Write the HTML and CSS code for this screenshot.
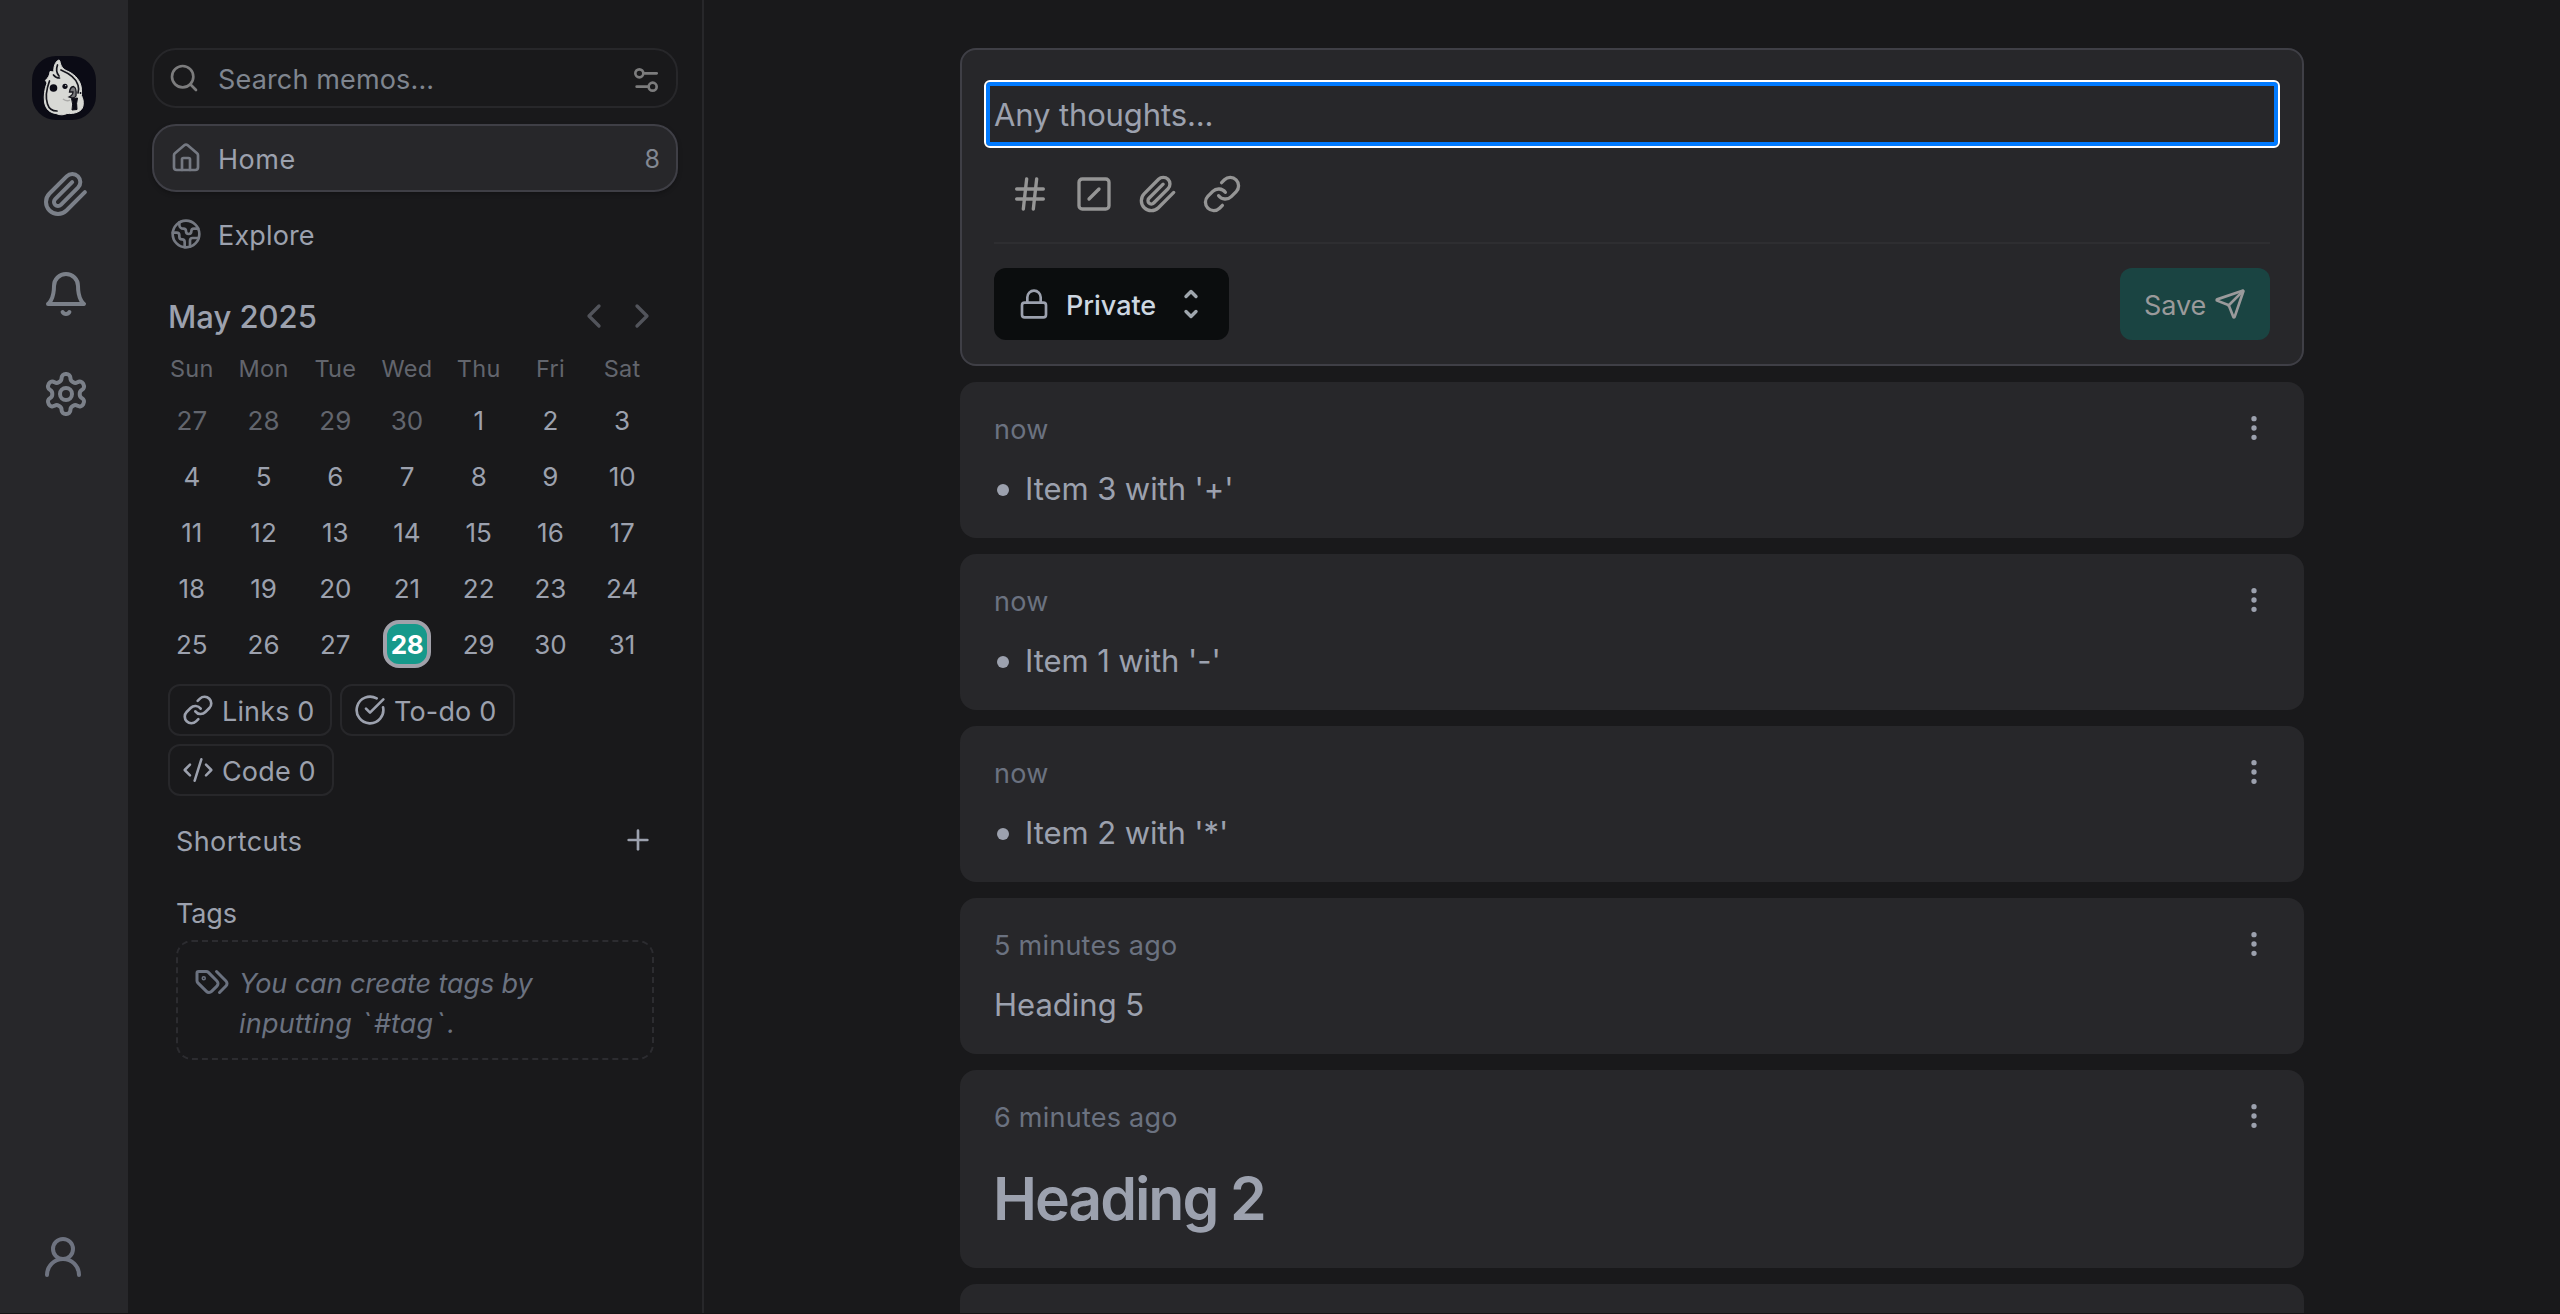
FILE: index.html
```
<!DOCTYPE html>
<html lang="en">
<head>
<meta charset="utf-8">
<title>Memos</title>
<link rel="stylesheet" href="styles.css">
</head>
<body>
<svg class="sprite" aria-hidden="true">
  <symbol id="clip" viewBox="0 0 24 24"><path d="m21.44 11.05-9.19 9.19a6 6 0 0 1-8.49-8.49l8.57-8.57A4 4 0 1 1 18 8.84l-8.59 8.57a2 2 0 0 1-2.83-2.83l8.49-8.48"/></symbol>
  <symbol id="link" viewBox="0 0 24 24"><path d="M10 13a5 5 0 0 0 7.54.54l3-3a5 5 0 0 0-7.07-7.07l-1.72 1.71"/><path d="M14 11a5 5 0 0 0-7.54-.54l-3 3a5 5 0 0 0 7.07 7.07l1.71-1.71"/></symbol>
  <symbol id="dots" viewBox="0 0 24 24"><circle cx="12" cy="12" r="1"/><circle cx="12" cy="5" r="1"/><circle cx="12" cy="19" r="1"/></symbol>
</svg>
<div class="app">
  <nav class="rail">
    <div class="rail-top">
      <svg class="avatar" viewBox="0 0 64 64">
        <rect width="64" height="64" rx="24" fill="#0b0b15"/>
        <path d="M26.3 4.2C23 6 21.500 11 21.800 16L18 15.500C18 19 16 22 13.500 24.300L15 27C12.500 33 11.800 40 12.500 46C13.500 53 18 57 24 57.500C28 59.500 32 59 35 57.500C42 58 50 56 51 50C52 45 50.500 42 49.500 39.500C49.500 37 50 31 48 27C45 20 39 16.500 34 14.500C30 12 28.500 9 28 5.500Q27.500 3.600 26.300 4.200Z" fill="#d8d9d5" stroke="#d8d9d5" stroke-width="1"/>
        <path d="M25.500 9C24 13 24.500 17 27 20M21.500 19C23 21 25 22 27.500 22M17.500 25C14.500 33 13.500 42 15.500 48C17 53 21 55 25 55M29 14C36 17 44 21 46 29C47 32 46.500 35 46 37" fill="none" stroke="#15151c" stroke-width="1.700" stroke-linecap="round"/>
        <path d="M31 43Q35 46 38 44" fill="none" stroke="#aaaaa8" stroke-width="1.500"/>
        <circle cx="21.500" cy="32" r="3.800" fill="#0b0b15"/>
        <circle cx="33" cy="30.300" r="2.600" fill="#0b0b15"/><circle cx="33.700" cy="29.600" r=".7" fill="#d8d9d5"/>
        <path d="M37.500 36Q38 31 41.500 30.500Q45 32 44 40Q42 43 37 41Q41 39 41 36Z" fill="#77777a" stroke="#15151c" stroke-width="1.300"/>
        <path d="M39.500 42.500L45.500 42Q44 47 45 53.500L40 54Q41.500 48 39.500 42.500Z" fill="#0b0b15" stroke="#0b0b15"/>
        <circle cx="48.500" cy="37" r=".9" fill="#0b0b15"/>
      </svg>
      <svg class="icon rail-icon"><use href="#clip"/></svg>
      <svg class="icon rail-icon" viewBox="0 0 24 24"><path d="M6 8a6 6 0 0 1 12 0c0 7 3 9 3 9H3s3-2 3-9"/><path d="M10.300 21a1.940 1.940 0 0 0 3.400 0"/></svg>
      <svg class="icon rail-icon" viewBox="0 0 24 24"><path d="M12.220 2h-.44a2 2 0 0 0-2 2v.18a2 2 0 0 1-1 1.730l-.43.25a2 2 0 0 1-2 0l-.15-.08a2 2 0 0 0-2.730.73l-.22.38a2 2 0 0 0 .73 2.730l.15.1a2 2 0 0 1 1 1.720v.51a2 2 0 0 1-1 1.740l-.15.09a2 2 0 0 0-.73 2.730l.22.38a2 2 0 0 0 2.730.73l.15-.08a2 2 0 0 1 2 0l.43.25a2 2 0 0 1 1 1.730V20a2 2 0 0 0 2 2h.44a2 2 0 0 0 2-2v-.18a2 2 0 0 1 1-1.730l.43-.25a2 2 0 0 1 2 0l.15.08a2 2 0 0 0 2.730-.73l.22-.39a2 2 0 0 0-.73-2.730l-.15-.08a2 2 0 0 1-1-1.740v-.5a2 2 0 0 1 1-1.740l.15-.09a2 2 0 0 0 .73-2.730l-.22-.38a2 2 0 0 0-2.730-.73l-.15.08a2 2 0 0 1-2 0l-.43-.25a2 2 0 0 1-1-1.730V4a2 2 0 0 0-2-2z"/><circle cx="12" cy="12" r="3"/></svg>
    </div>
    <svg class="icon user-icon" viewBox="0 0 24 24"><circle cx="12" cy="8" r="5"/><path d="M20 21a8 8 0 0 0-16 0"/></svg>
  </nav>

  <aside class="sidebar">
    <div class="search">
      <svg class="icon" viewBox="0 0 24 24"><circle cx="11" cy="11" r="8"/><path d="m21 21-4.300-4.300"/></svg>
      <span class="search-text">Search memos...</span>
      <svg class="icon filter-icon" viewBox="0 0 24 24"><path d="M20 7h-9"/><path d="M14 17H5"/><circle cx="17" cy="17" r="3"/><circle cx="7" cy="7" r="3"/></svg>
    </div>
    <a class="nav-item active">
      <svg class="icon" viewBox="0 0 24 24"><path d="M15 21v-8a1 1 0 0 0-1-1h-4a1 1 0 0 0-1 1v8"/><path d="M3 10a2 2 0 0 1 .709-1.528l7-5.999a2 2 0 0 1 2.582 0l7 5.999A2 2 0 0 1 21 10v9a2 2 0 0 1-2 2H5a2 2 0 0 1-2-2z"/></svg>
      <span class="nav-label home-label">Home</span><span class="count">8</span>
    </a>
    <a class="nav-item explore">
      <svg class="icon" viewBox="0 0 24 24"><path d="M21.540 15H17a2 2 0 0 0-2 2v4.540"/><path d="M7 3.340V5a3 3 0 0 0 3 3a2 2 0 0 1 2 2c0 1.100.9 2 2 2a2 2 0 0 0 2-2c0-1.100.9-2 2-2h3.170"/><path d="M11 21.950V18a2 2 0 0 0-2-2a2 2 0 0 1-2-2v-1a2 2 0 0 0-2-2H2.050"/><circle cx="12" cy="12" r="10"/></svg>
      <span class="nav-label">Explore</span>
    </a>
    <div class="month">
      <span class="month-name">May 2025</span>
      <svg class="icon arrow" viewBox="0 0 24 24"><path d="m15 18-6-6 6-6"/></svg>
      <svg class="icon arrow" viewBox="0 0 24 24"><path d="m9 18 6-6-6-6"/></svg>
    </div>
    <div class="weekdays"><span>Sun</span><span>Mon</span><span>Tue</span><span>Wed</span><span>Thu</span><span>Fri</span><span>Sat</span></div>
    <div class="days">
      <span class="out">27</span><span class="out">28</span><span class="out">29</span><span class="out">30</span><span>1</span><span>2</span><span>3</span>
      <span>4</span><span>5</span><span>6</span><span>7</span><span>8</span><span>9</span><span>10</span>
      <span>11</span><span>12</span><span>13</span><span>14</span><span>15</span><span>16</span><span>17</span>
      <span>18</span><span>19</span><span>20</span><span>21</span><span>22</span><span>23</span><span>24</span>
      <span>25</span><span>26</span><span>27</span><span class="today"><b>28</b></span><span>29</span><span>30</span><span>31</span>
    </div>
    <div class="chips">
      <div class="chip chip-links"><svg class="icon"><use href="#link"/></svg><span>Links 0</span></div>
      <div class="chip chip-todo"><svg class="icon" viewBox="0 0 24 24"><path d="M21.801 10A10 10 0 1 1 17 3.335"/><path d="m9 11 3 3L22 4"/></svg><span>To-do 0</span></div>
      <div class="chip chip-code"><svg class="icon" viewBox="0 0 24 24"><path d="m18 16 4-4-4-4"/><path d="m6 8-4 4 4 4"/><path d="m14.500 4-5 16"/></svg><span>Code 0</span></div>
    </div>
    <div class="section shortcuts"><span class="shortcuts-label">Shortcuts</span><svg class="icon plus" viewBox="0 0 24 24"><path d="M5 12h14"/><path d="M12 5v14"/></svg></div>
    <div class="section tags"><span>Tags</span></div>
    <div class="tag-hint">
      <svg class="icon" viewBox="0 0 24 24"><path d="m15 5 6.300 6.300a2.400 2.400 0 0 1 0 3.400L17 19"/><path d="M9.586 5.586A2 2 0 0 0 8.172 5H3a1 1 0 0 0-1 1v5.172a2 2 0 0 0 .586 1.414L8.290 18.290a2.426 2.426 0 0 0 3.420 0l3.580-3.580a2.426 2.426 0 0 0 0-3.420z"/><circle cx="6.500" cy="9.500" r=".5"/></svg>
      <p>You can create tags by<br><span class="hint-end">inputting <span class="tick">`</span>#tag<span class="tick">`</span>.</span></p>
    </div>
  </aside>

  <main class="main">
    <section class="editor">
      <div class="field">Any thoughts...</div>
      <div class="tools">
        <svg class="icon" viewBox="0 0 24 24"><path d="M4 9h16M4 15h16M10 3 8 21M16 3l-2 18"/></svg>
        <svg class="icon" viewBox="0 0 24 24"><rect x="3" y="3" width="18" height="18" rx="2"/><path d="m9 15 6-6"/></svg>
        <svg class="icon"><use href="#clip"/></svg>
        <svg class="icon"><use href="#link"/></svg>
      </div>
      <div class="actions">
        <div class="visibility">
          <svg class="icon lock" viewBox="0 0 24 24"><rect x="3" y="11" width="18" height="11" rx="2"/><path d="M7 11V7a5 5 0 0 1 10 0v4"/></svg>
          <span>Private</span>
          <svg class="icon updown" viewBox="0 0 16 32"><path d="m3 8.500 5-5 5 5M3 23.500l5 5 5-5"/></svg>
        </div>
        <div class="save"><span>Save</span><svg class="icon" viewBox="0 0 24 24"><path d="M14.536 21.686a.5.5 0 0 0 .937-.024l6.500-19a.496.496 0 0 0-.635-.635l-19 6.500a.5.5 0 0 0-.024.937l7.930 3.180a2 2 0 0 1 1.112 1.110z"/><path d="m21.854 2.147-10.940 10.939"/></svg></div>
      </div>
    </section>
    <article class="memo">
      <header><time>now</time><svg class="icon"><use href="#dots"/></svg></header>
      <div class="body item"><i class="bullet"></i><span>Item 3 with '+'</span></div>
    </article>
    <article class="memo">
      <header><time>now</time><svg class="icon"><use href="#dots"/></svg></header>
      <div class="body item"><i class="bullet"></i><span>Item 1 with '-'</span></div>
    </article>
    <article class="memo">
      <header><time>now</time><svg class="icon"><use href="#dots"/></svg></header>
      <div class="body item"><i class="bullet"></i><span>Item 2 with '*'</span></div>
    </article>
    <article class="memo">
      <header><time>5 minutes ago</time><svg class="icon"><use href="#dots"/></svg></header>
      <h5 class="body">Heading 5</h5>
    </article>
    <article class="memo memo-h2">
      <header><time>6 minutes ago</time><svg class="icon"><use href="#dots"/></svg></header>
      <h2 class="body">Heading 2</h2>
    </article>
    <article class="memo"></article>
  </main>
</div>
</body>
</html>
```
FILE: styles.css
```
* { box-sizing: border-box; margin: 0; padding: 0; }
html, body { height: 100%; overflow: hidden; }
body {
  background: #161415;
  color: #9ca1ae;
  font: 440 27px/40px Inter, "Liberation Sans", sans-serif;
  letter-spacing: .15px;
}
.sprite { display: none; }
.app { display: flex; height: 1313px; background: #19191b; overflow: hidden; }

.icon {
  display: block;
  flex: none;
  width: 32px;
  height: 32px;
  fill: none;
  stroke: currentColor;
  stroke-width: 2;
  stroke-linecap: round;
  stroke-linejoin: round;
}

/* Icon rail */
.rail {
  flex: none;
  width: 128px;
  padding: 56px 32px 32px;
  background: #27272a;
  display: flex;
  flex-direction: column;
  justify-content: space-between;
  color: #7b8089;
}
.rail-top { display: flex; flex-direction: column; gap: 52px; }
.avatar { width: 64px; height: 64px; margin-bottom: -2px; }
.rail-icon { width: 48px; height: 48px; margin-left: 10px; }
.user-icon { width: 48px; height: 48px; margin-left: 7px; color: #6e7380; }

/* Sidebar */
.sidebar {
  flex: none;
  width: 576px;
  padding: 48px 24px 0;
  border-right: 2px solid #27272a;
  display: flex;
  flex-direction: column;
}
.search {
  height: 60px;
  border: 2px solid #27272a;
  border-radius: 24px;
  padding: 0 14px;
  display: flex;
  align-items: center;
  color: #7c7c7d;
}
.search-text { flex: 1; padding: 3px 0 0 18px; color: #7f858f; }
.filter-icon { margin-top: 4px; }
.nav-item {
  height: 68px;
  border: 2px solid transparent;
  border-radius: 24px;
  padding: 0 16px;
  display: flex;
  align-items: center;
  gap: 16px;
}
.nav-item .icon { color: #757982; }
.nav-item.active {
  margin-top: 16px;
  background: #27272a;
  border-color: #3f3f46;
  box-shadow: 0 2px 4px rgba(0, 0, 0, .25);
}
.explore { margin-top: 8px; }
.nav-label { padding-top: 3px; }
.home-label { letter-spacing: .5px; }
.count { margin-left: auto; padding-top: 2px; font-size: 25px; letter-spacing: 0; color: #838892; }

.month {
  height: 40px;
  margin-top: 28px;
  padding: 0 16px;
  display: flex;
  align-items: center;
  gap: 8px;
}
.month-name { flex: 1; padding-top: 2px; font-size: 31px; font-weight: 540; letter-spacing: 0; }
.arrow { width: 40px; height: 40px; color: #52545b; }
.weekdays, .days {
  display: grid;
  grid-template-columns: repeat(7, 1fr);
  width: 502px;
  margin-left: 4px;
  text-align: center;
}
.weekdays { margin-top: 16px; font-size: 23.5px; line-height: 34px; height: 32px; letter-spacing: .25px; color: #62656d; }
.days { margin-top: 8px; grid-auto-rows: 56px; line-height: 58px; font-size: 26px; letter-spacing: 0; }
.out { color: #62656d; }
.today { display: flex; align-items: center; justify-content: center; }
.today b {
  width: 48px;
  height: 48px;
  border: 4px solid #a1a1aa;
  border-radius: 16px;
  background: #16998b;
  color: #fff;
  line-height: 42px;
  letter-spacing: -.3px;
}

.chips { display: flex; flex-wrap: wrap; gap: 8px; margin-top: 12px; padding: 0 16px; }
.chip {
  height: 52px;
  padding: 0 12px;
  border: 2px solid #27272a;
  border-radius: 12px;
  display: flex;
  align-items: center;
  gap: 8px;
}
.chip span { padding-top: 3px; white-space: nowrap; }
.chip-links { width: 164px; }
.chip-todo { width: 175px; }
.chip-code { width: 166px; }
.chip-code .icon { stroke-width: 1.9; }

.section { height: 40px; padding: 2px 24px 0; display: flex; justify-content: space-between; }
.shortcuts { margin-top: 24px; }
.shortcuts-label { letter-spacing: .4px; }
.plus { margin-top: 2px; }
.tags { margin-top: 32px; letter-spacing: -.15px; }
.tag-hint {
  height: 120px;
  margin: 8px 24px 0;
  padding: 22px 16px 0;
  border: 2px dashed #2c2c30;
  border-radius: 16px;
  display: flex;
  gap: 9px;
  font-style: italic;
  letter-spacing: -.08px;
  color: #6b7280;
}
.tag-hint .icon { width: 36px; height: 36px; }
.hint-end { letter-spacing: .2px; }
.tick { margin: 0 3px 0 2px; }

/* Main column */
.main {
  flex: 1;
  padding-top: 48px;
  display: flex;
  flex-direction: column;
  align-items: center;
  gap: 16px;
}
.editor {
  flex: none;
  width: 1344px;
  height: 318px;
  padding: 30px 22px 24px;
  border: 2px solid #3f3f46;
  border-radius: 16px;
  background: #27272a;
}
.field {
  height: 68px;
  padding-left: 8px;
  border: 2px solid #fff;
  border-radius: 6px;
  box-shadow: inset 0 0 0 4px #007aff;
  font-size: 31px;
  line-height: 65px;
  letter-spacing: -.12px;
}
.tools { display: flex; gap: 24px; margin: 26px 10px 0; padding: 0 16px 28px; border-bottom: 2px solid #2e2e31; color: #959595; }
.tools .icon { width: 40px; height: 40px; }
.actions { display: flex; justify-content: space-between; margin: 24px 10px 0; }
.visibility, .save { height: 72px; border-radius: 12px; display: flex; align-items: center; }
.visibility { width: 235px; padding: 0 24px; background: #0b0d0e; color: #cdd7e1; font-weight: 500; letter-spacing: -.03px; }
.visibility span { padding: 3px 0 0 16px; flex: 1; }
.lock { color: #9ca1ae; }
.updown { width: 16px; height: 32px; margin-right: 6px; stroke-width: 3.4; color: #9fa6ad; }
.save { width: 150px; padding-left: 24px; gap: 8px; background: #1a4442; color: #9a9a9b; letter-spacing: -.05px; }
.save span { padding-top: 3px; }

.memo {
  flex: none;
  width: 1344px;
  height: 156px;
  padding: 30px 34px 0;
  border-radius: 16px;
  background: #27272a;
}
.memo header { display: flex; justify-content: space-between; height: 32px; }
.memo time { line-height: 35px; letter-spacing: .25px; color: #6b7280; }
.body { margin-top: 20px; height: 48px; font-size: 31px; line-height: 49px; font-weight: 440; letter-spacing: 0; }
.item { display: flex; align-items: center; gap: 16px; letter-spacing: -.08px; }
.bullet { width: 12px; height: 12px; margin: 4px 0 0 3px; border-radius: 50%; background: currentColor; }
.memo-h2 { height: 198px; }
.memo-h2 .body { height: 93px; line-height: 93px; font-size: 59px; font-weight: 600; letter-spacing: -2.05px; margin-left: -1px; }
```
